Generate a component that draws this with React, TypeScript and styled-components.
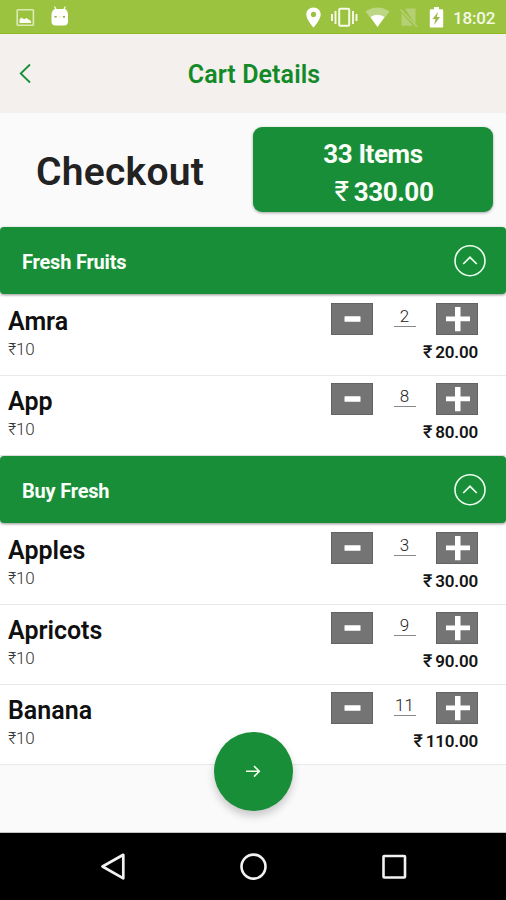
import React from "react";
import styled, { createGlobalStyle } from "styled-components";

const GREEN = "#198e38";

const GlobalStyle = createGlobalStyle`
  *, *::before, *::after { box-sizing: border-box; }
  body { margin: 0; background: #fafafa; font-family: Roboto, "Liberation Sans", sans-serif; }
`;

const Screen = styled.div`
  position: relative;
  display: flex;
  flex-direction: column;
  width: 506px;
  height: 900px;
  overflow: hidden;
  background: #fafafa;
`;

const StatusBar = styled.div`
  display: flex;
  justify-content: space-between;
  flex: none;
  height: 34px;
  background: #9bc340;
  border-bottom: 1px solid #8fba22;
`;

const Clock = styled.span`
  width: 43px;
  margin: 0 10px 0 9px;
  font-size: 17px;
  line-height: 36px;
  font-weight: 500;
  letter-spacing: -0.2px;
  white-space: nowrap;
  color: #f4f9e6;
`;

const StatusGroup = styled.div`
  display: flex;
`;

const TitleBar = styled.header`
  display: grid;
  grid-template-columns: 50px 1fr 50px;
  align-items: center;
  flex: none;
  height: 79px;
  background: #f3f0ed;
`;

const IconButton = styled.button`
  display: flex;
  padding: 0;
  border: 0;
  background: none;
`;

const Title = styled.h1`
  margin: 3px 0 0 2px;
  text-align: center;
  font-size: 25px;
  line-height: 30px;
  font-weight: 600;
  letter-spacing: 0.1px;
  color: #138a28;
`;

const Summary = styled.section`
  display: flex;
  align-items: flex-start;
  justify-content: space-between;
  flex: none;
  height: 114px;
  padding: 14px 13px 0 36px;
`;

const CheckoutLabel = styled.h2`
  margin: 22px 0 0;
  font-size: 39px;
  line-height: 46px;
  font-weight: 600;
  letter-spacing: 0.25px;
  color: #222;
`;

const TotalCard = styled.div`
  display: flex;
  flex-direction: column;
  align-items: center;
  width: 240px;
  height: 85px;
  padding-top: 8px;
  border-radius: 9px;
  background: ${GREEN};
  box-shadow: 0 1px 3px rgba(0, 0, 0, 0.35);
  color: #fafff8;
  font-size: 26px;
  line-height: 38px;
  font-weight: 700;
  letter-spacing: -0.4px;
`;

const TotalLine = styled.div<{ $indent?: number }>`
  display: flex;
  padding-left: ${(p) => p.$indent ?? 0}px;
  white-space: nowrap;
`;

const Rupee = styled.span<{ $gap: number; $weight: number; $size: number }>`
  margin-right: ${(p) => p.$gap}px;
  font-size: ${(p) => p.$size}px;
  font-weight: ${(p) => p.$weight};
`;

const Group = styled.section`
  flex: none;
`;

const GroupHeader = styled.div`
  position: relative;
  display: flex;
  align-items: center;
  justify-content: space-between;
  height: 67px;
  margin-bottom: 2px;
  padding: 0 19px 0 22px;
  border-radius: 4px;
  background: ${GREEN};
  box-shadow: 0 1px 3px rgba(0, 0, 0, 0.4);
`;

const GroupName = styled.h3`
  margin: 2px 0 0;
  font-size: 20px;
  line-height: 24px;
  font-weight: 700;
  letter-spacing: -0.2px;
  color: #fafff8;
`;

const ItemRow = styled.div`
  display: flex;
  justify-content: space-between;
  height: 80px;
  padding: 7px 28px 0 8px;
  border-bottom: 1px solid #e9e9e9;
  background: #fff;
`;

const ItemName = styled.div`
  margin-top: 5px;
  font-size: 25px;
  line-height: 28px;
  font-weight: 600;
  letter-spacing: 0;
  color: #101010;
`;

const UnitPrice = styled.div`
  font-size: 17px;
  line-height: 26px;
  font-weight: 300;
  letter-spacing: -0.2px;
  color: #333;
`;

const Controls = styled.div`
  width: 147px;
`;

const Stepper = styled.div`
  display: flex;
  justify-content: space-between;
  height: 32px;
`;

const StepButton = styled.button`
  display: flex;
  width: 42px;
  height: 32px;
  padding: 0;
  border: 1px solid #636363;
  background: #747474;
`;

const Quantity = styled.span`
  width: 22px;
  height: 24px;
  border-bottom: 1px solid #888;
  text-align: center;
  font-size: 17px;
  line-height: 26px;
  font-weight: 300;
  color: #222;
`;

const LineTotal = styled.div`
  display: flex;
  justify-content: flex-end;
  margin-top: 6px;
  font-size: 17px;
  line-height: 22px;
  font-weight: 600;
  letter-spacing: -0.2px;
  color: #151515;
`;

const NextButton = styled.button`
  position: absolute;
  left: 214px;
  top: 732px;
  width: 79px;
  height: 79px;
  padding: 0;
  border: 0;
  border-radius: 50%;
  background: ${GREEN};
  box-shadow: 0 5px 8px rgba(0, 0, 0, 0.2);
`;

const NavBar = styled.nav`
  display: grid;
  grid-template-columns: repeat(3, 140px);
  justify-content: center;
  justify-items: center;
  flex: none;
  height: 67px;
  margin-top: auto;
  background: #000;
  box-shadow: 0 -1px 0 #c4c4c4;
`;

const NotificationIcons = () => (
  <svg width="80" height="34" viewBox="0 0 80 34">
    <rect x="17.2" y="9.8" width="16.2" height="15.4" rx="0.8" fill="none" stroke="#dceab5" strokeWidth="1.6" />
    <path d="M19.5 23v-3.500l2-2 2.500 1.800 2.500-1.300 4.500 3V23z" fill="#fbfdf5" />
    <path d="M54.500 6.500l1.600 3M65.300 6.500l-1.500 3" stroke="#f4f9e6" strokeWidth="1.300" />
    <path
      d="M54.500 9h11q2.500 2 2.500 5v7.500q0 4-4 4h-8.500q-4 0-4-4V14q0-3 3-5z"
      fill="#fff"
    />
    <path d="M54.500 16.800h2.200M62.800 16.800H65" stroke="#8fab45" strokeWidth="1.500" />
    <path d="M58.700 17h2" stroke="#d5e2b3" strokeWidth="1" />
  </svg>
);

const SystemIcons = () => (
  <svg width="140" height="34" viewBox="304 0 140 34">
    <path
      fill="#fff"
      fillRule="evenodd"
      d="M313.500 7.500c-4.200 0-7.200 3-7.200 7 0 5 7.200 13 7.200 13s7.200-8 7.200-13c0-4-3-7-7.200-7zm0 4.300a2.600 2.600 0 110 5.200 2.600 2.600 0 010-5.200z"
    />
    <rect x="339.200" y="8.800" width="10" height="17" rx="1" fill="none" stroke="#f6fae9" strokeWidth="2" />
    <path
      d="M335.500 11v13M332 14v7M353 11v13M356.500 14v7"
      stroke="#f6fae9"
      strokeWidth="1.900"
      fill="none"
    />
    <path d="M365.500 11.500q12-8 24 0L377.500 27z" fill="#bdd684" />
    <path d="M370.500 17q7-4.500 14 0l-7 10z" fill="#fff" />
    <path d="M405 8.500h10.500v16zM401.500 13l11.500 12.800h-11.500z" fill="#b5cf75" />
    <path d="M400.500 9.500l16.500 17" stroke="#b5cf75" strokeWidth="1.700" />
    <path
      d="M434 7h5v2.200h3q1.200 0 1.200 1.200v16q0 1.200-1.200 1.200h-11q-1.200 0-1.200-1.200v-16q0-1.200 1.200-1.200h3z"
      fill="#fff"
    />
    <path d="M438 12l-5.500 7h3l-1.500 6 6-8h-3.200z" fill="#9bb94a" />
  </svg>
);

const BackIcon = () => (
  <svg width="50" height="30" viewBox="0 0 50 30" fill="none" stroke={GREEN} strokeWidth="1.800">
    <path d="M30 5.500l-9.300 9 9.300 9" />
  </svg>
);

const CollapseIcon = () => (
  <svg width="34" height="34" viewBox="0 0 34 34" fill="none" stroke="#eaffed">
    <circle cx="17" cy="16.700" r="15" strokeWidth="1.600" />
    <path d="M10.200 20l6.800-6.700 6.800 6.700" strokeWidth="1.700" />
  </svg>
);

const StepIcon = ({ plus = false }: { plus?: boolean }) => (
  <svg width="40" height="30" viewBox="0 0 40 30" fill="#fff">
    {plus ? (
      <path d="M18 3h5.500v9.500H33v4.800h-9.500v10H18v-10H9v-4.800h9z" />
    ) : (
      <rect x="12.500" y="12.200" width="16" height="5.600" rx="0.500" />
    )}
  </svg>
);

const ArrowIcon = () => (
  <svg width="79" height="79" viewBox="0 0 79 79" fill="none" stroke="#f3ffe9" strokeWidth="1.600">
    <path d="M32 39.300h13M40 34l5.300 5.300-5.300 5.300" />
  </svg>
);

const BackNav = () => (
  <svg width="40" height="67" viewBox="0 0 40 67" fill="none" stroke="#f2f2f2" strokeWidth="2.700">
    <path d="M9.500 33.500L30.300 21.800v23.500z" strokeLinejoin="round" />
  </svg>
);

const HomeNav = () => (
  <svg width="40" height="67" viewBox="0 0 40 67" fill="none" stroke="#f2f2f2" strokeWidth="2.600">
    <circle cx="20.500" cy="33.600" r="12" />
  </svg>
);

const RecentNav = () => (
  <svg width="40" height="67" viewBox="0 0 40 67" fill="none" stroke="#f2f2f2" strokeWidth="2.600">
    <rect x="10.500" y="23" width="21.500" height="21.500" rx="0.800" />
  </svg>
);

interface Item {
  name: string;
  qty: number;
  total: string;
}

const groups: { name: string; items: Item[] }[] = [
  {
    name: "Fresh Fruits",
    items: [
      { name: "Amra", qty: 2, total: "20.00" },
      { name: "App", qty: 8, total: "80.00" },
    ],
  },
  {
    name: "Buy Fresh",
    items: [
      { name: "Apples", qty: 3, total: "30.00" },
      { name: "Apricots", qty: 9, total: "90.00" },
      { name: "Banana", qty: 11, total: "110.00" },
    ],
  },
];

const CartItem = ({ name, qty, total }: Item) => (
  <ItemRow>
    <div>
      <ItemName>{name}</ItemName>
      <UnitPrice>₹10</UnitPrice>
    </div>
    <Controls>
      <Stepper>
        <StepButton aria-label="Decrease"><StepIcon /></StepButton>
        <Quantity>{qty}</Quantity>
        <StepButton aria-label="Increase"><StepIcon plus /></StepButton>
      </Stepper>
      <LineTotal>
        <Rupee $gap={3} $weight={500} $size={18}>₹</Rupee>
        {total}
      </LineTotal>
    </Controls>
  </ItemRow>
);

export default function App() {
  return (
    <>
      <GlobalStyle />
      <Screen>
        <StatusBar>
          <NotificationIcons />
          <StatusGroup>
            <SystemIcons />
            <Clock>18:02</Clock>
          </StatusGroup>
        </StatusBar>
        <TitleBar>
          <IconButton aria-label="Back"><BackIcon /></IconButton>
          <Title>Cart Details</Title>
        </TitleBar>
        <Summary>
          <CheckoutLabel>Checkout</CheckoutLabel>
          <TotalCard>
            <TotalLine>33 Items</TotalLine>
            <TotalLine $indent={22}>
              <Rupee $gap={5} $weight={400} $size={28}>₹</Rupee>
              330.00
            </TotalLine>
          </TotalCard>
        </Summary>
        {groups.map((group) => (
          <Group key={group.name}>
            <GroupHeader>
              <GroupName>{group.name}</GroupName>
              <CollapseIcon />
            </GroupHeader>
            {group.items.map((item) => (
              <CartItem key={item.name} {...item} />
            ))}
          </Group>
        ))}
        <NextButton aria-label="Continue"><ArrowIcon /></NextButton>
        <NavBar>
          <BackNav />
          <HomeNav />
          <RecentNav />
        </NavBar>
      </Screen>
    </>
  );
}
